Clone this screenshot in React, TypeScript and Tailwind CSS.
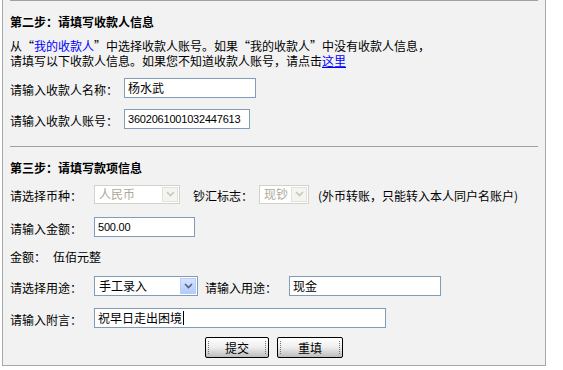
import { ReactNode } from "react";

function TextBox({ value, width, caret = false, digits = false }: { value: string; width: string; caret?: boolean; digits?: boolean }) {
  return (
    <div
      className={`${width} h-[20px] shrink-0 bg-white border border-[#7f9db9] pl-[3px] flex items-center leading-[16px] overflow-hidden whitespace-nowrap ${
        digits ? "font-['Liberation_Sans',sans-serif] text-[11px] tracking-[-0.2px]" : ""
      }`}
    >
      {value}
      {caret && <span className="inline-block w-px h-[14px] bg-black ml-px" />}
    </div>
  );
}

function Chevron({ color }: { color: string }) {
  return (
    <svg width="9" height="6" viewBox="0 0 9 6">
      <path d="M1 1 L4.5 4.5 L8 1" fill="none" stroke={color} strokeWidth="1.6" />
    </svg>
  );
}

function Select({ value, width, disabled = false }: { value: string; width: string; disabled?: boolean }) {
  return (
    <div
      className={`${width} shrink-0 flex items-stretch border bg-white ${
        disabled ? "h-[19px] border-[#d5d3c8] text-[#aca899]" : "h-[20px] border-[#7f9db9] text-black"
      }`}
    >
      <div className="flex-1 pl-[4px] flex items-center leading-none whitespace-nowrap overflow-hidden">{value}</div>
      <div
        className={`w-[16px] m-px flex items-center justify-center border ${
          disabled
            ? "bg-[#f4f4f0] border-[#e2e1da]"
            : "bg-gradient-to-b from-[#d6e3fe] to-[#b5cafa] border-[#b9cdf9]"
        }`}
      >
        <Chevron color={disabled ? "#c9c7ba" : "#4d6185"} />
      </div>
    </div>
  );
}

function Button({ label, width }: { label: string; width: string }) {
  return (
    <div
      className={`${width} h-[21px] rounded-[2px] border border-black bg-gradient-to-b from-white via-[#ededed] to-[#bdbdbd] flex items-center justify-between px-[2px]`}
    >
      <span className="w-px h-[13px] border-l border-dotted border-[#777]" />
      <span className="leading-none">{label}</span>
      <span className="w-px h-[13px] border-l border-dotted border-[#777]" />
    </div>
  );
}

function Row({ children, className = "" }: { children: ReactNode; className?: string }) {
  return <div className={`flex items-center h-[20px] ${className}`}>{children}</div>;
}

function Label({ children, width }: { children: ReactNode; width?: string }) {
  return <span className={`${width ?? ""} leading-[14px] pt-[3px] shrink-0 whitespace-nowrap`}>{children}</span>;
}

export default function App() {
  return (
    <div className="w-[563px] h-[370px] bg-white text-black text-[12px] leading-[15px] font-['Noto_Sans_CJK_SC','Noto_Sans',sans-serif]">
      <div className="ml-[2px] w-[544px] h-[366px] bg-[#f2f2f2] border-x border-b border-[#a8a8a8] pl-[7px]">
        <div className="h-px w-[528px] bg-[#a0a0a0]" />

        <div className="mt-[13px] font-bold h-[16px] leading-[16px]">第二步：请填写收款人信息</div>
        <div className="mt-[8px] h-[30px] leading-[15px]">
          从“<span className="text-[#0000ff]">我的收款人</span>”中选择收款人账号。如果“我的收款人”中没有收款人信息，
          <br />
          请填写以下收款人信息。如果您不知道收款人账号，请点击
          <a className="text-[#0000ff] underline">这里</a>
        </div>

        <Row className="mt-[10px]">
          <Label width="w-[114px]">请输入收款人名称：</Label>
          <TextBox value="杨水武" width="w-[132px]" />
        </Row>
        <Row className="mt-[11px]">
          <Label width="w-[114px]">请输入收款人账号：</Label>
          <TextBox value="3602061001032447613" width="w-[126px]" digits />
        </Row>

        <div className="mt-[17px] h-px w-[528px] bg-[#a0a0a0]" />

        <div className="mt-[13px] font-bold h-[16px] leading-[16px]">第三步：请填写款项信息</div>

        <Row className="mt-[8px]">
          <Label width="w-[84px]">请选择币种：</Label>
          <Select value="人民币" width="w-[86px]" disabled />
          <span className="ml-[13px] mr-[6px] leading-[14px] pt-[3px]">钞汇标志：</span>
          <Select value="现钞" width="w-[50px]" disabled />
          <span className="ml-[9px] leading-[14px] pt-[3px]">(外币转账，只能转入本人同户名账户)</span>
        </Row>

        <Row className="mt-[13px]">
          <Label width="w-[84px]">请输入金额：</Label>
          <TextBox value="500.00" width="w-[101px]" digits />
        </Row>

        <div className="mt-[11px] h-[16px] leading-[16px] pt-[1px]">
          金额：<span className="ml-[7px]">伍佰元整</span>
        </div>

        <Row className="mt-[12px]">
          <Label width="w-[84px]">请选择用途：</Label>
          <Select value="手工录入" width="w-[104px]" />
          <span className="ml-[7px] mr-[12px] leading-[14px] pt-[3px]">请输入用途：</span>
          <TextBox value="现金" width="w-[152px]" />
        </Row>

        <Row className="mt-[12px]">
          <Label width="w-[84px]">请输入附言：</Label>
          <TextBox value="祝早日走出困境" width="w-[292px]" caret />
        </Row>

        <div className="mt-[9px] flex justify-center gap-[8px] pr-[7px]">
          <Button label="提交" width="w-[64px]" />
          <Button label="重填" width="w-[66px]" />
        </div>
      </div>
    </div>
  );
}
